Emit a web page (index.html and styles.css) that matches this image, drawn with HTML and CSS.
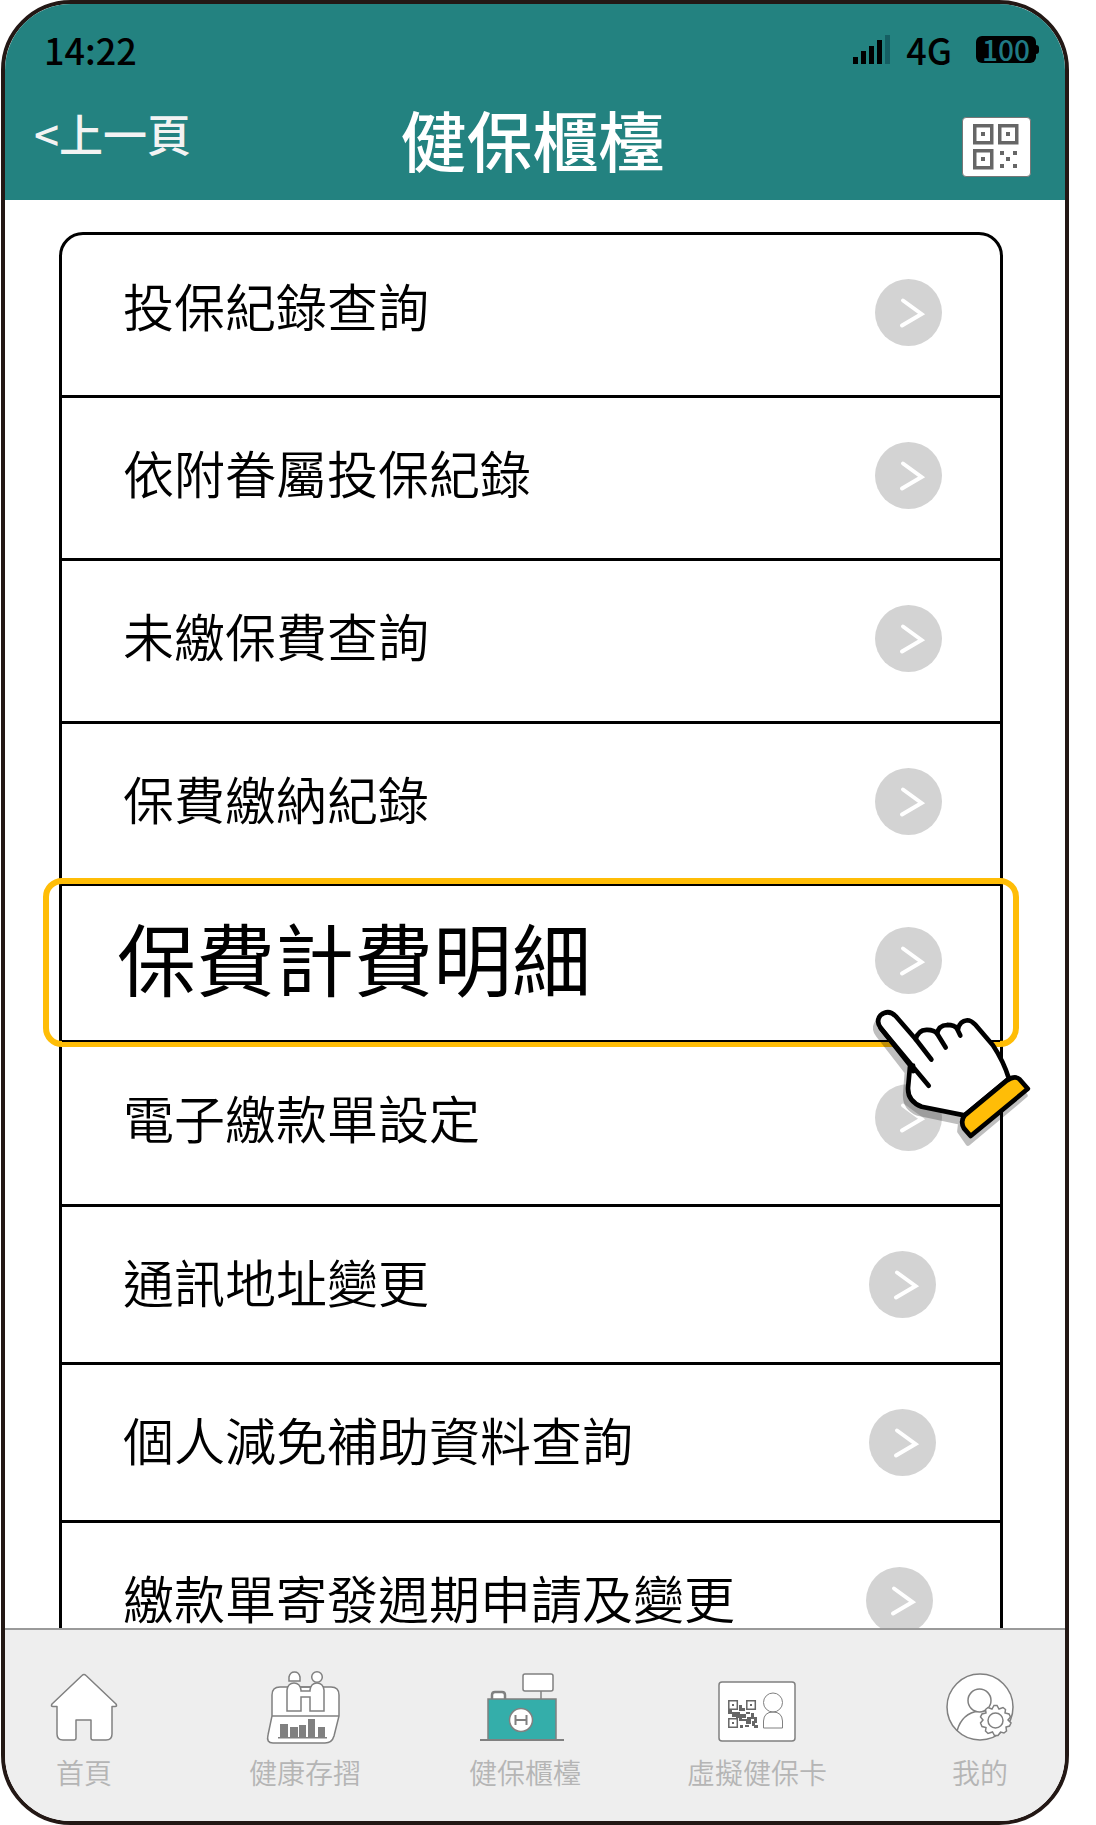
FILE: index.html
```html
<!DOCTYPE html>
<html lang="zh-Hant">
<head>
<meta charset="utf-8">
<meta name="viewport" content="width=device-width, initial-scale=1">
<title>健保櫃檯</title>
<link rel="stylesheet" href="styles.css">
</head>
<body>
<svg class="defs" width="0" height="0" aria-hidden="true">
  <symbol id="chevron" viewBox="0 0 67 67">
    <circle cx="33.5" cy="33.5" r="33.5" fill="#d3d3d3"/>
    <path d="M28 21.5 46.500 35 27 46.500" fill="none" stroke="#fff" stroke-width="4" stroke-linecap="round"/>
  </symbol>
</svg>
<div class="phone">
  <header class="top">
    <div class="status">
      <time>14:22</time>
      <div class="status-right">
        <svg width="37" height="29" viewBox="0 0 37 29" aria-hidden="true">
          <path d="M0 22h5v7H0zM8 16h5v13H8zM16 11h5v18h-5zM24 5h5v24h-5z"/>
          <path d="M32 0h5v29h-5z" fill="#155f63"/>
        </svg>
        <span class="network">4G</span>
        <span class="battery">100</span>
      </div>
    </div>
    <div class="titlebar">
      <a class="back" href="#">&lt;上一頁</a>
      <h1>健保櫃檯</h1>
      <button class="qr" type="button" aria-label="QR Code">
        <svg width="46" height="46" viewBox="0 0 46 46" aria-hidden="true">
          <g fill="none" stroke="#666" stroke-width="3.500"><path d="M1.750 1.750h17v17h-17zM26.750 1.750h17v17h-17zM1.750 26.750h17v17h-17z"/></g>
          <path fill="#666" d="M8 8h4v4H8zM33 8h4v4h-4zM8 33h4v4H8zM27 27h4v4h-4zM40 27h4v4h-4zM33 33h4v4h-4zM27 40h4v4h-4zM40 40h4v4h-4z"/>
        </svg>
      </button>
    </div>
  </header>

  <main class="content">
    <ul class="menu">
      <li class="first"><a href="#"><span>投保紀錄查詢</span><svg class="go"><use href="#chevron"/></svg></a></li>
      <li><a href="#"><span>依附眷屬投保紀錄</span><svg class="go"><use href="#chevron"/></svg></a></li>
      <li><a href="#"><span>未繳保費查詢</span><svg class="go"><use href="#chevron"/></svg></a></li>
      <li><a href="#"><span>保費繳納紀錄</span><svg class="go"><use href="#chevron"/></svg></a></li>
      <li class="active">
        <a href="#"><span>保費計費明細</span><svg class="go"><use href="#chevron"/></svg></a>
        <svg class="hand" viewBox="280 430 480 430" aria-hidden="true">
          <g transform="translate(-8 20)" opacity=".25" stroke="#000" stroke-width="15" stroke-linejoin="round">
            <path d="M303 503Q287 482 302 464Q326 444 348 467L410 527Q425 503 453 510L475 515Q484 490 515 494L536 504Q546 477 576 481L640 558Q673 605 688 654L712 651L745 685L573 829L548 793L551 766L423 739Q382 722 385 680L390 615Z"/>
          </g>
          <g fill="#fff" stroke="#000" stroke-width="14" stroke-linecap="round" stroke-linejoin="round">
            <path d="M303 503Q287 482 302 464Q326 444 348 467L408 536Q415 509 440 508Q462 507 472 519Q477 494 502 493Q525 493 535 506Q540 481 563 479Q574 479 586 491L640 554Q672 602 688 654L555 765L426 739Q382 722 385 680L391 614Z"/>
            <path fill="none" d="M303 503 447 676M408 536 455 597M472 519 498 561M530 500 542 525M400 632V615"/>
            <path fill="#ffbd07" d="M555 765 682 660Q706 644 720 656L745 685L573 827L553 804Q541 782 555 765Z"/>
          </g>
        </svg>
      </li>
      <li class="after-active"><a href="#"><span>電子繳款單設定</span><svg class="go"><use href="#chevron"/></svg></a></li>
      <li class="compact"><a href="#"><span>通訊地址變更</span><svg class="go"><use href="#chevron"/></svg></a></li>
      <li class="compact"><a href="#"><span>個人減免補助資料查詢</span><svg class="go"><use href="#chevron"/></svg></a></li>
      <li class="compact"><a href="#"><span>繳款單寄發週期申請及變更</span><svg class="go"><use href="#chevron"/></svg></a></li>
    </ul>
  </main>

  <nav class="tabs">
    <a href="#">
      <svg width="68" height="76" viewBox="0 0 68 76" aria-hidden="true" fill="#fff" stroke="#808080" stroke-width="1.500" stroke-linejoin="round">
        <path d="M32 5.500Q34 3.500 36 5.500L66 34Q67.500 36.500 65 36.500H62V64Q62 70 56 70H43Q41 70 41 68V50H26V68Q26 70 24 70H13Q7 70 7 64V36.500H3Q.500 36.500 2 34Z"/>
      </svg>
      首頁
    </a>
    <a href="#">
      <svg width="80" height="76" viewBox="0 0 80 76" aria-hidden="true" fill="#fff" stroke="#808080" stroke-width="1.500">
        <path d="M7 46V25Q7 17 15 17H66Q74 17 74 25V46L69 66Q67 73 60 73H8Q1 73 3 65Z"/>
        <path d="M7 46H74" fill="none"/>
        <path d="M22 41V20Q23 13 29 13T36 20V21H45V20Q46 13 52 13T59 20V41H45V27H36V41Z"/>
        <path d="M36 17H45" />
        <path d="M24 11V7Q25 2 29.500 2T35 7V11Z"/><circle cx="52" cy="7" r="5.300"/>
        <path fill="#808080" stroke="none" d="M15 54h8v13h-8zM25 57h8v10h-8zM34 55h7v12h-7zM43 49h7v18h-7zM53 57h7v10h-7zM13 67h49v1.500H13z"/>
      </svg>
      健康存摺
    </a>
    <a href="#">
      <svg width="90" height="76" viewBox="0 0 90 76" aria-hidden="true" fill="#fff" stroke="#808080" stroke-width="1.500">
        <path stroke-width="2.500" d="M12 30V25Q12 22 15 22H22Q25 22 25 25V30"/>
        <path d="M61 20V29"/><rect x="43" y="4" width="30" height="17" rx="2"/>
        <path fill="#34aeaa" d="M8 29H76V70H8Z"/><path stroke-width="2" d="M0 70H84"/>
        <circle cx="41" cy="50" r="11.500"/>
        <path stroke-width="2" d="M35.500 45V55M46.500 45V55M35.500 50H46.500"/>
      </svg>
      健保櫃檯
    </a>
    <a href="#">
      <svg width="78" height="76" viewBox="0 0 78 76" aria-hidden="true" fill="none" stroke="#808080" stroke-width="1.500">
        <rect x="1" y="12" width="76" height="59" rx="3" fill="#fff"/>
        <circle cx="55" cy="32.500" r="9.500" stroke-width="1"/><path stroke-width="1" d="M45.500 58V51Q46 42 55 42T64.500 51V58Z"/>
        <g stroke="#666"><path d="M10.800 30.800h8.500v8.500h-8.500zM28.800 30.800h8.500v8.500h-8.500zM10.800 48.800h8.500v8.500h-8.500z"/></g>
        <path fill="#666" stroke="none" d="M14 34h2v2h-2zM32 34h2v2h-2zM14 52h2v2h-2zM21 35h3v3h3v3h-6zM10 40h4v4h-4zM14 42h8v2h6v4h-4v3h-3v-3h-3v-1h-4zM28 42h4v2h-4zM33 43h3v6h-3zM24 49h5v-2h4v7h-5v-3h-4zM36 47h3v6h-3zM22 55h3v3h-3zM27 55h4v2h-4zM34 51h3v4h3v3h-4v-2h-2z"/>
      </svg>
      虛擬健保卡
    </a>
    <a href="#">
      <svg width="68" height="76" viewBox="1 0 68 76" aria-hidden="true" fill="#fff" stroke="#808080" stroke-width="1.500">
        <circle cx="35" cy="37" r="33"/>
        <path fill="none" d="M12 61Q17 43 34 41"/>
        <circle cx="34.500" cy="30.500" r="11.500"/>
        <path d="M47 39 49 35.500H52L54 39 58 37.500 60.500 39.500 60 43 64 44 65.500 47 63 50 66 53 64.500 56 61 57 61.500 61 59 63 55.500 62 53 65.500H49.500L47.500 62 43 63.500 40.500 61 41 57.500 37 56.500 35.500 53 38 50 35.500 47 37 44 41 43 40.500 39.500 43 37.500Z"/>
        <circle cx="50.500" cy="50.500" r="7.500"/>
      </svg>
      我的
    </a>
  </nav>
</div>
</body>
</html>
```
FILE: styles.css
```css
* { box-sizing: border-box; }

body {
  margin: 0;
  padding: 0 27px 0 1px;
  background: #fff;
  color: #000;
  font-family: "Noto Sans CJK TC", "Noto Sans", sans-serif;
}

a { color: inherit; text-decoration: none; }
svg { display: block; flex: none; }
.defs { position: absolute; }

.phone {
  display: flex;
  flex-direction: column;
  height: 100vh;
  overflow: hidden;
  border: 4px solid #231815;
  border-radius: 70px;
  background: #fff;
}

/* header */
.top {
  height: 196px;
  padding: 19px 34px 0 29px;
  background: #238280;
}
.status {
  display: flex;
  justify-content: space-between;
  align-items: center;
  height: 52px;
  padding-left: 10px;
  font-size: 36px;
  font-weight: 500;
  line-height: 52px;
}
.status-right {
  display: flex;
  align-items: center;
  margin-right: -5px;
}
.network { margin: 0 24px 0 16px; }
.battery {
  position: relative;
  width: 60px;
  height: 27px;
  border-radius: 6px;
  background: #000;
  color: #1f7a85;
  font-size: 28px;
  line-height: 27px;
  text-align: center;
}
.battery::after {
  content: "";
  position: absolute;
  right: -3px;
  top: 9px;
  width: 6px;
  height: 9px;
  border-radius: 3px;
  background: #000;
}
.titlebar {
  display: grid;
  grid-template-columns: 1fr auto 1fr;
  align-items: center;
  height: 125px;
  color: #fff;
}
.back {
  padding-bottom: 10px;
  color: #f3f3f3;
  font-size: 44px;
  font-weight: 500;
  line-height: 60px;
}
h1 {
  margin: 0;
  font-size: 66px;
  font-weight: 500;
  line-height: 96px;
}
.qr {
  display: grid;
  place-items: center;
  justify-self: end;
  width: 69px;
  height: 60px;
  margin-top: 18px;
  padding: 0 2px 0 0;
  border: 1px solid #777;
  border-radius: 4px;
  background: #fff;
}

/* menu list */
.content {
  flex: 1;
  min-height: 0;
  overflow: hidden;
  padding: 32px 62px 0 54px;
}
.menu {
  margin: 0;
  padding: 0;
  list-style: none;
  border: 3px solid #000;
  border-radius: 24px 24px 0 0;
}
.menu li { position: relative; }
.menu li + li { border-top: 3px solid #000; }
.menu a {
  display: flex;
  justify-content: space-between;
  align-items: center;
  height: 160px;
  padding: 0 58px 5px 61px;
  font-size: 51px;
  font-weight: 350;
  line-height: 72px;
}
.menu span { padding-bottom: 8px; }
.menu .first span { padding-bottom: 16px; }
.go { width: 67px; height: 67px; }
.menu .active { border-top-width: 2px; }
.menu .active a {
  height: 154px;
  padding-left: 55px;
  font-size: 79px;
  font-weight: 400;
}
.active::before {
  content: "";
  position: absolute;
  inset: -8px -19px -7px -19px;
  border: 6px solid #ffbd07;
  border-radius: 19px;
}
.hand {
  position: absolute;
  z-index: 1;
  right: -33px;
  bottom: -107px;
  width: 160px;
  height: 143px;
}
.menu .after-active { border-top-width: 2px; }
.menu .after-active a { height: 162px; padding-bottom: 12px; }
.menu .after-active span { padding-bottom: 0; }
.menu .compact a { height: 155px; padding: 0 64px 0 61px; }
.menu .compact:last-child a { padding-right: 67px; }

/* bottom tabs */
.tabs {
  display: grid;
  grid-template-columns: 158fr 284fr 156fr 308fr 138fr;
  height: 193px;
  padding: 40px 16px 0 0;
  border-top: 2px solid #9a9a9a;
  background: #eee;
  color: #b5b5b5;
  font-size: 28px;
  font-weight: 350;
  line-height: 40px;
}
.tabs a {
  display: flex;
  flex-direction: column;
  align-items: center;
  gap: 6px;
}
```
